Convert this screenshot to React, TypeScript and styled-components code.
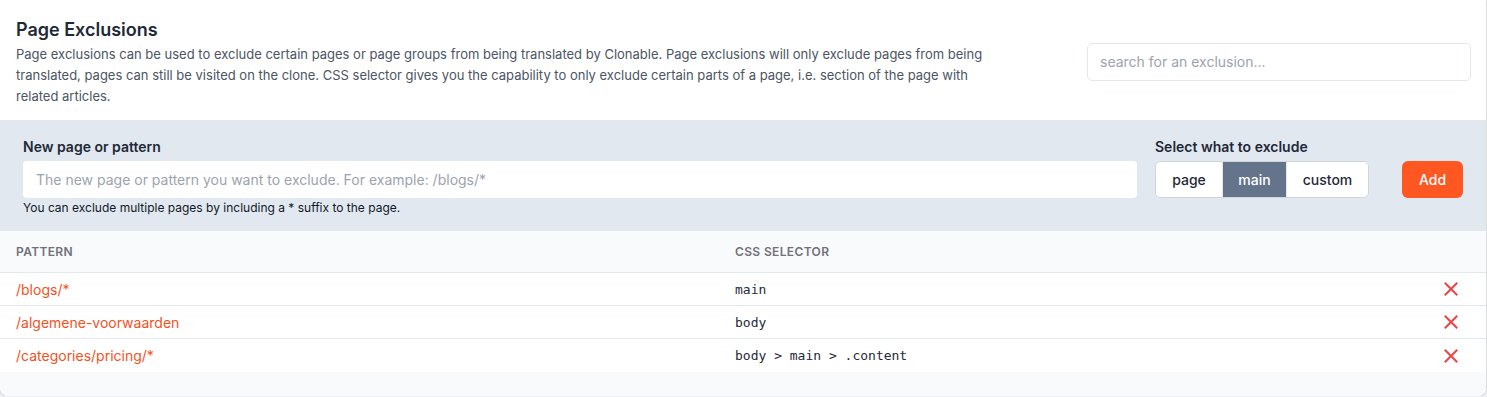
import React from "react";
import styled, { createGlobalStyle } from "styled-components";

const Global = createGlobalStyle`
  html, body { margin: 0; padding: 0; background: #eef0f3; }
  body { font-family: Inter, "Noto Sans", sans-serif; -webkit-font-smoothing: antialiased; }
  * { box-sizing: border-box; }
`;

const Card = styled.div`
  width: 1486px;
  height: 396px;
  background: #ffffff;
  border-radius: 0 0 8px 8px;
  box-shadow: 0 1px 2px rgba(0, 0, 0, 0.12), 0 0 0 1px rgba(0, 0, 0, 0.04);
  overflow: hidden;
  display: flex;
  flex-direction: column;
`;

const Header = styled.div`
  display: flex;
  align-items: center;
  padding: 16px 15px 13px 16px;
  gap: 30px;
`;

const Intro = styled.div`
  flex: 1;
  padding-right: 61px;
`;

const Title = styled.h2`
  margin: 0;
  font-size: 18px;
  line-height: 28px;
  font-weight: 600;
  color: #1f2937;
`;

const Description = styled.p`
  margin: 0;
  font-size: 13px;
  line-height: 21px;
  color: #4b5563;
`;

const SearchInput = styled.input`
  width: 384px;
  height: 38px;
  border: 1px solid #e2e8f0;
  border-radius: 5px;
  padding: 0 12px;
  font-family: inherit;
  font-size: 14px;
  color: #111827;
  outline: none;
  &::placeholder { color: #9ca3af; }
`;

const AddBar = styled.div`
  background: #e2e8f0;
  display: flex;
  align-items: flex-start;
  padding: 17px 23px 15px 23px;
`;

const Field = styled.div<{ $grow?: boolean; $gap?: number }>`
  display: flex;
  flex-direction: column;
  flex: ${(p) => (p.$grow ? 1 : "none")};
  margin-left: ${(p) => p.$gap ?? 0}px;
`;

const Label = styled.label`
  font-size: 14px;
  line-height: 20px;
  font-weight: 600;
  color: #1f2937;
  margin-bottom: 4px;
`;

const PatternInput = styled.input`
  height: 37px;
  border: none;
  border-radius: 4px;
  background: #ffffff;
  padding: 0 13px;
  font-family: inherit;
  font-size: 14px;
  outline: none;
  &::placeholder { color: #9ca3af; }
`;

const Help = styled.div`
  margin-top: 2px;
  font-size: 12px;
  line-height: 16px;
  color: #111827;
`;

const Segmented = styled.div`
  display: flex;
  height: 37px;
  border: 1px solid #d1d5db;
  border-radius: 6px;
  overflow: hidden;
  background: #ffffff;
`;

const Segment = styled.button<{ $active?: boolean; $w: number }>`
  width: ${(p) => p.$w}px;
  border: none;
  margin: 0;
  padding: 0;
  font-family: inherit;
  font-size: 14px;
  font-weight: 500;
  background: ${(p) => (p.$active ? "#64748b" : "#ffffff")};
  color: ${(p) => (p.$active ? "#ffffff" : "#1f2937")};
  & + & { border-left: 1px solid #e5e7eb; }
`;

const AddButton = styled.button`
  margin-top: 24px;
  margin-left: 33px;
  width: 61px;
  height: 37px;
  border: none;
  border-radius: 6px;
  background: #ff5722;
  color: #ffffff;
  font-family: inherit;
  font-size: 14px;
  font-weight: 500;
`;

const Table = styled.div`
  display: flex;
  flex-direction: column;
  flex: 1;
  background: #f8fafc;
`;

const Row = styled.div<{ $head?: boolean }>`
  display: grid;
  grid-template-columns: 719px 1fr 64px;
  align-items: center;
  height: ${(p) => (p.$head ? 42 : 33)}px;
  background: ${(p) => (p.$head ? "#f9fafc" : "#ffffff")};
  border-bottom: 1px solid #e2e8f0;
  &:last-child { border-bottom: none; }
`;

const HeadCell = styled.div`
  padding-left: 16px;
  font-size: 12px;
  font-weight: 600;
  letter-spacing: 0.03em;
  text-transform: uppercase;
  color: #71717a;
`;

const PatternCell = styled.div`
  padding-left: 16px;
  font-size: 14px;
  color: #f4511e;
`;

const SelectorCell = styled.div`
  padding-left: 16px;
  font-family: "DejaVu Sans Mono", "Liberation Mono", monospace;
  font-size: 13px;
  color: #1f2937;
`;

const RemoveCell = styled.div`
  display: flex;
  justify-content: flex-start;
  padding-left: 22px;
`;

const XIcon = () => (
  <svg width="14" height="14" viewBox="0 0 14 14" fill="none">
    <path d="M1.5 1.5L12.5 12.5M12.5 1.5L1.5 12.5" stroke="#ef4444" strokeWidth="2" strokeLinecap="square" />
  </svg>
);

const rows = [
  { pattern: "/blogs/*", selector: "main" },
  { pattern: "/algemene-voorwaarden", selector: "body" },
  { pattern: "/categories/pricing/*", selector: "body > main > .content" },
];

export default function App() {
  return (
    <>
      <Global />
      <Card>
        <Header>
          <Intro>
            <Title>Page Exclusions</Title>
            <Description>
              Page exclusions can be used to exclude certain pages or page groups from being translated by Clonable. Page
              exclusions will only exclude pages from being translated, pages can still be visited on the clone. CSS
              selector gives you the capability to only exclude certain parts of a page, i.e. section of the page with
              related articles.
            </Description>
          </Intro>
          <SearchInput placeholder="search for an exclusion..." />
        </Header>
        <AddBar>
          <Field $grow>
            <Label>New page or pattern</Label>
            <PatternInput placeholder="The new page or pattern you want to exclude. For example: /blogs/*" />
            <Help>You can exclude multiple pages by including a * suffix to the page.</Help>
          </Field>
          <Field $gap={18}>
            <Label>Select what to exclude</Label>
            <Segmented>
              <Segment $w={66}>page</Segment>
              <Segment $w={64} $active>
                main
              </Segment>
              <Segment $w={82}>custom</Segment>
            </Segmented>
          </Field>
          <AddButton>Add</AddButton>
        </AddBar>
        <Table>
          <Row $head>
            <HeadCell>Pattern</HeadCell>
            <HeadCell>CSS Selector</HeadCell>
            <div />
          </Row>
          {rows.map((r) => (
            <Row key={r.pattern}>
              <PatternCell>{r.pattern}</PatternCell>
              <SelectorCell>{r.selector}</SelectorCell>
              <RemoveCell>
                <XIcon />
              </RemoveCell>
            </Row>
          ))}
        </Table>
      </Card>
    </>
  );
}
